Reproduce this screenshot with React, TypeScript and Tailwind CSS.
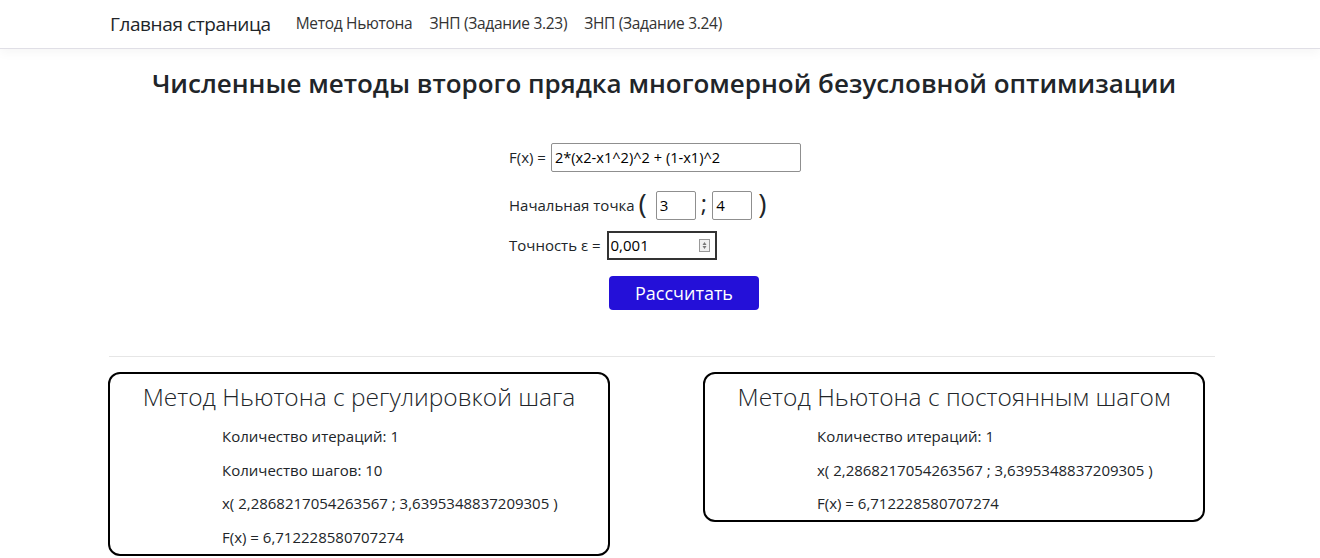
import React from "react";

const font = { fontFamily: '"Open Sans", "Noto Sans", sans-serif' };

function ResultCard({ title, lines }: { title: string; lines: string[] }) {
  return (
    <div className="w-[502px] border-2 border-black rounded-[12px] pt-[8px] pb-[7px] bg-white">
      <h4 className="text-center text-[24.5px] font-light leading-[1.2] text-[#212529] mb-[15px]">{title}</h4>
      <div className="pl-[112px] flex flex-col gap-[13.5px] text-[15px] leading-[20px] text-[#212529]">
        {lines.map((l) => (
          <p key={l}>{l}</p>
        ))}
      </div>
    </div>
  );
}

export default function App() {
  return (
    <div className="min-h-[558px] bg-white text-[#212529]" style={font}>
      <nav className="h-[49px] border-b border-[#e0dfe6] shadow-[0_4px_10px_rgba(0,0,0,0.04)] bg-white">
        <div className="w-[1110px] mx-auto h-full flex items-center pl-[5px]">
          <a className="text-[19px] text-[#212529] mr-[25px] tracking-[-0.4px]">Главная страница</a>
          <ul className="flex gap-[17px] text-[15.5px] text-[#333] tracking-[-0.3px]">
            <li>Метод Ньютона</li>
            <li>ЗНП (Задание 3.23)</li>
            <li>ЗНП (Задание 3.24)</li>
          </ul>
        </div>
      </nav>

      <main className="w-[1110px] mx-auto pl-[4px]">
        <h1 className="text-center text-[26px] font-semibold mt-[16px] leading-[36px] pl-[4px]">
          Численные методы второго прядка многомерной безусловной оптимизации
        </h1>

        <div className="flex justify-center mt-[42px]">
          <div className="w-[300px] -ml-[6px] flex flex-col text-[15px]">
            <div className="flex items-center h-[28px]">
              <span className="mr-[5px]">F(x) =</span>
              <input
                className="w-[250px] h-[29px] border border-[#8f8f8f] rounded-[2px] px-[3px] text-[14.6px] text-black outline-none"
                defaultValue="2*(x2-x1^2)^2 + (1-x1)^2"
              />
            </div>
            <div className="flex items-center h-[28px] mt-[20px]">
              <span>Начальная точка</span>
              <span className="text-[28px] leading-none ml-[4px] mr-[9px] -mt-[5px]">(</span>
              <input
                className="w-[40px] h-[29px] border border-[#8f8f8f] rounded-[2px] px-[3px] text-[15px] text-black outline-none"
                defaultValue="3"
              />
              <span className="text-[24px] leading-none mx-[5px] -mt-[4px]">;</span>
              <input
                className="w-[40px] h-[29px] border border-[#8f8f8f] rounded-[2px] px-[3px] text-[15px] text-black outline-none"
                defaultValue="4"
              />
              <span className="text-[28px] leading-none ml-[6px] -mt-[5px]">)</span>
            </div>
            <div className="flex items-center h-[28px] mt-[12px]">
              <span className="mr-[6px]">Точность ε =</span>
              <div className="w-[110px] h-[29px] border-2 border-[#333] flex items-center justify-between px-[2px]">
                <span className="text-[15px] text-black">0,001</span>
                <svg width="11" height="13" viewBox="0 0 11 13" className="mr-[3px]">
                  <rect x="0.5" y="0.5" width="10" height="12" fill="#f0f0f0" stroke="#999" />
                  <path d="M5.5 3 L7.5 6 L3.5 6 Z" fill="#777" />
                  <path d="M3.5 7 L7.5 7 L5.5 10 Z" fill="#777" />
                </svg>
              </div>
            </div>
            <button className="mt-[17px] ml-[100px] w-[150px] h-[34px] rounded-[4px] bg-[#2410d8] text-white text-[18px]">
              Рассчитать
            </button>
          </div>
        </div>

        <hr className="mt-[46px] border-t border-[#e6e6e6]" />

        <div className="flex items-start justify-between mt-[15px] pr-[10px] -ml-[1px]">
          <ResultCard
            title="Метод Ньютона с регулировкой шага"
            lines={[
              "Количество итераций: 1",
              "Количество шагов: 10",
              "x( 2,2868217054263567 ; 3,6395348837209305 )",
              "F(x) = 6,712228580707274",
            ]}
          />
          <ResultCard
            title="Метод Ньютона с постоянным шагом"
            lines={[
              "Количество итераций: 1",
              "x( 2,2868217054263567 ; 3,6395348837209305 )",
              "F(x) = 6,712228580707274",
            ]}
          />
        </div>
      </main>
    </div>
  );
}
